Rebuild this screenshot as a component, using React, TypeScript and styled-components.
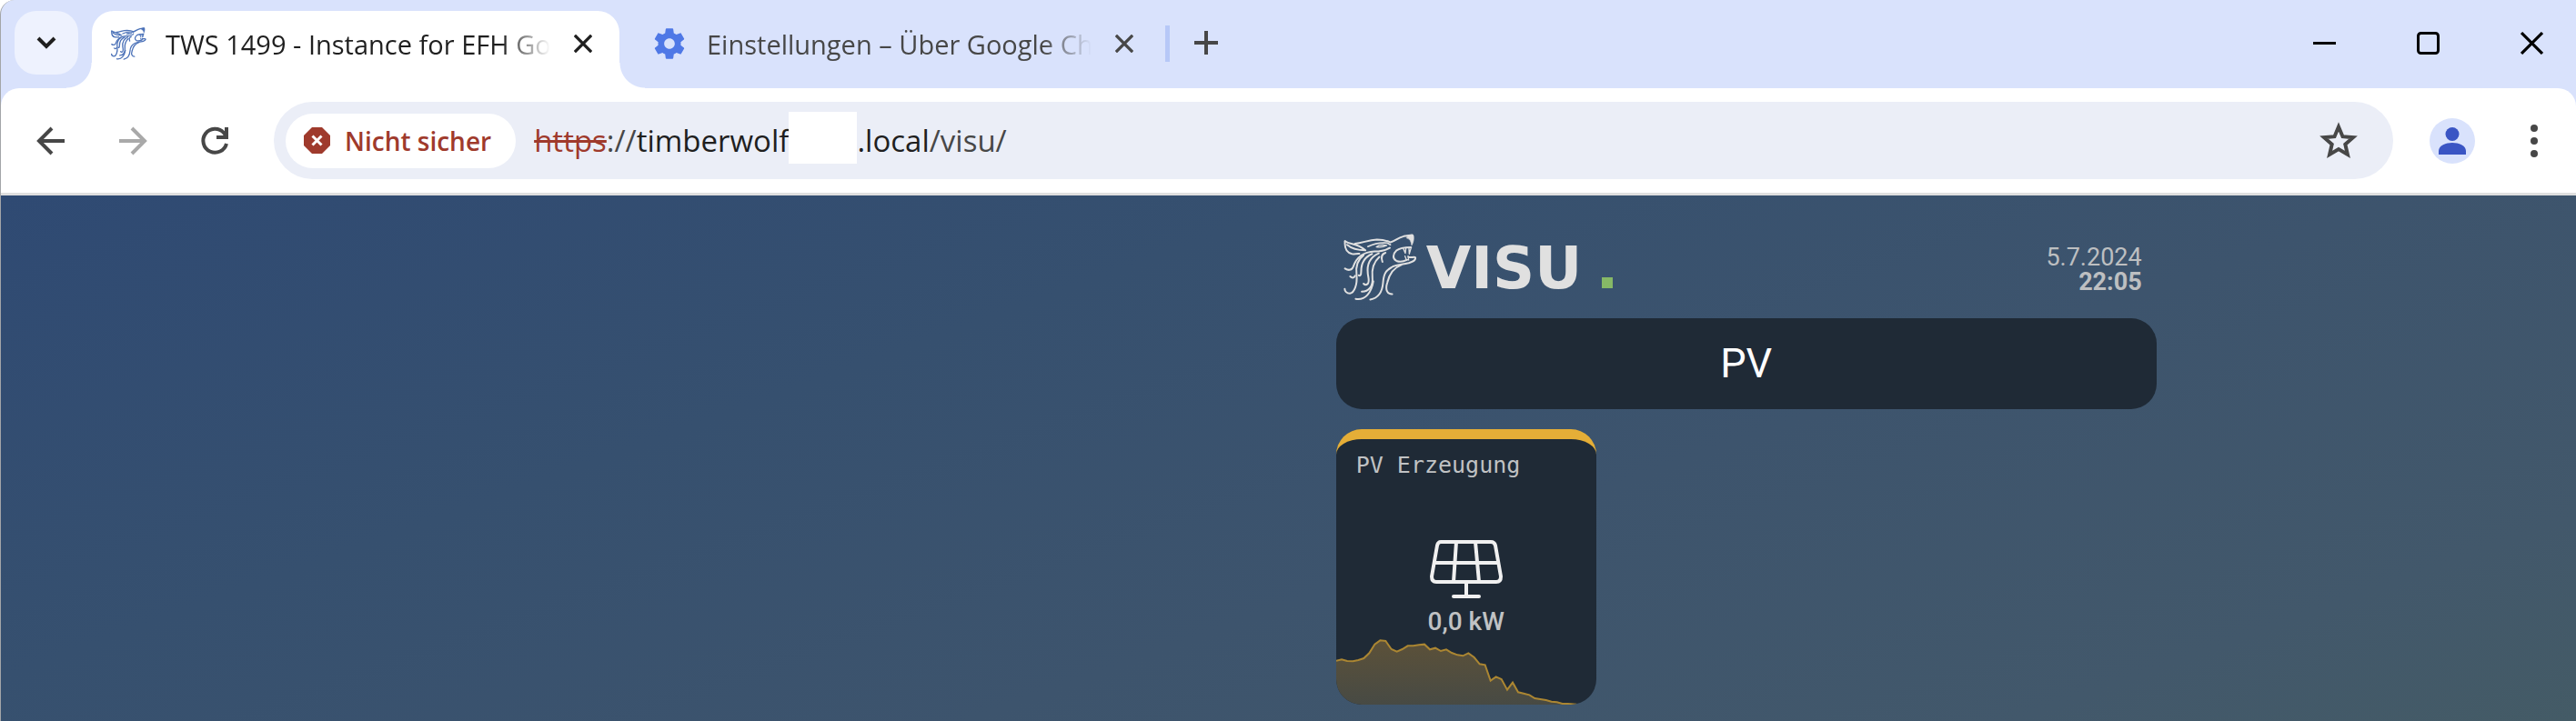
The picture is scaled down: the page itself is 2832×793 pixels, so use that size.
import React from "react";
import styled, { createGlobalStyle, css } from "styled-components";

const uiFont = `"Segoe UI", "Open Sans", "Noto Sans", sans-serif`;

const GlobalStyle = createGlobalStyle`
  *, *::before, *::after { box-sizing: border-box; }
  body { margin: 0; font-family: ${uiFont}; }
  button { border: 0; padding: 0; background: none; color: inherit; font: inherit; cursor: pointer; }
`;

const Window = styled.div`
  display: flex;
  flex-direction: column;
  min-height: 100vh;
  border-left: 1px solid #a3a5a8;
  border-top-left-radius: 16px;
  background: #d9e2fc;
`;

const TabStrip = styled.header`
  display: flex;
  align-items: flex-start;
  height: 97px;
  padding: 12px 0 0 15px;
`;

const SearchTabs = styled.button`
  display: flex;
  align-items: center;
  justify-content: center;
  width: 70px;
  height: 70px;
  margin-right: 15px;
  border-radius: 24px;
  background: #eef2fe;
  color: #1f1f1f;
`;

const Tab = styled.div<{ $active?: boolean }>`
  position: relative;
  display: flex;
  align-items: center;
  width: 580px;
  height: 85px;
  padding: 0 13px 14px 35px;
  color: #474747;
  ${(p) =>
    p.$active &&
    css`
      padding: 0 28px 14px 20px;
      color: #1f1f1f;
      background: #fff;
      border-radius: 24px 24px 0 0;
      &::before,
      &::after {
        content: "";
        position: absolute;
        bottom: 0;
        width: 28px;
        height: 28px;
      }
      &::before {
        right: 100%;
        background: radial-gradient(circle at 0 0, transparent 27px, #fff 28px);
      }
      &::after {
        left: 100%;
        background: radial-gradient(circle at 100% 0, transparent 27px, #fff 28px);
      }
    `}
`;

const TabIcon = styled.span`
  display: flex;
  justify-content: center;
  flex: none;
  width: 40px;
`;

const TabTitle = styled.button`
  flex: 1;
  margin: 0 12px 0 21px;
  padding-top: 2px;
  overflow: hidden;
  white-space: nowrap;
  text-align: left;
  font-size: 29px;
  line-height: 40px;
  mask-image: linear-gradient(to right, #000 calc(100% - 66px), transparent calc(100% - 12px));
`;

const TabClose = styled.button`
  display: flex;
  flex: none;
  padding: 2px;
`;

const NewTab = styled.button`
  display: flex;
  align-items: center;
  height: 70px;
  margin-left: 20px;
  padding-left: 24px;
  color: #474747;
  background: linear-gradient(#b7c8f7, #b7c8f7) 0 16px / 5px 40px no-repeat;
`;

const WindowControls = styled.div`
  display: flex;
  gap: 88px;
  margin-left: auto;
  padding: 23px 36px 0 0;
  color: #000;
`;

const ControlButton = styled.button`
  display: flex;
`;

const Toolbar = styled.nav`
  display: flex;
  align-items: center;
  height: 118px;
  padding: 0 42px 0 38px;
  border-bottom: 3px solid #dfdfdf;
  border-radius: 20px 20px 0 0;
  background: #fff;
`;

const NavButtons = styled.div`
  display: flex;
  gap: 56px;
  margin-right: 48px;
`;

const NavButton = styled.button<{ $muted?: boolean }>`
  display: flex;
  color: ${(p) => (p.$muted ? "#a9a9a9" : "#474747")};
`;

const Omnibox = styled.div`
  display: flex;
  flex: 1;
  align-items: center;
  height: 85px;
  padding: 0 38px 0 13px;
  border-radius: 43px;
  background: #ebeef7;
`;

const SecurityChip = styled.button`
  display: flex;
  align-items: center;
  gap: 16px;
  height: 60px;
  padding: 0 27px 0 20px;
  border-radius: 30px;
  background: #fff;
  color: #9f3a2c;
  font-size: 28px;
  font-weight: 600;
  white-space: nowrap;
`;

const Address = styled.div`
  display: flex;
  flex: 1;
  align-items: center;
  padding-left: 20px;
  color: #474747;
  font-size: 33px;
  line-height: 56px;
  white-space: nowrap;
`;

const Scheme = styled.s`
  color: #9f3a2c;
`;

const Host = styled.span`
  color: #1f1f1f;
`;

const Redacted = styled.span`
  width: 75px;
  height: 57px;
  margin-bottom: 6px;
  background: #fff;
`;

const Avatar = styled.button`
  display: flex;
  align-items: center;
  justify-content: center;
  width: 50px;
  height: 50px;
  margin: 0 61px 0 40px;
  border-radius: 50%;
  background: #d9e2fc;
  color: #3a55c4;
`;

const Page = styled.main`
  display: grid;
  grid-template-columns: 35fr 902px 11fr;
  flex: 1;
  align-content: start;
  padding: 38px 0 18px;
  background: linear-gradient(160deg, #2f4a73, #36506f 33%, #3d546d 60%, #42586b 86%, #445b66);
`;

const Content = styled.div`
  grid-column: 2;
  display: flex;
  flex-direction: column;
  font-family: Roboto, sans-serif;
`;

const VisuHeader = styled.header`
  display: flex;
  align-items: flex-start;
  justify-content: space-between;
  height: 97px;
  padding: 0 16px 0 8px;
`;

const Logo = styled.a`
  display: flex;
  align-items: flex-start;
  color: #e0e0e0;
  text-decoration: none;
`;

const Wordmark = styled.span`
  width: 193px;
  margin: 10px 0 0 10px;
  font-family: "DejaVu Sans", sans-serif;
  font-size: 64px;
  font-weight: 700;
  line-height: 64px;
`;

const LogoDot = styled.span`
  width: 12px;
  height: 12px;
  margin-top: 52px;
  background: #86b866;
`;

const Clock = styled.div`
  padding-top: 17px;
  color: #bdbfc1;
  font-size: 27px;
  line-height: 27px;
  text-align: right;
`;

const Time = styled.div`
  font-weight: 700;
`;

const PageTitle = styled.h1`
  margin: 0 0 22px;
  border-radius: 28px;
  background: #1f2a36;
  color: #fff;
  font-size: 45px;
  font-weight: 400;
  line-height: 100px;
  text-align: center;
`;

const Tile = styled.section`
  display: flex;
  flex-direction: column;
  width: 286px;
  height: 303px;
  overflow: hidden;
  border-top: 11px solid #e5ae37;
  border-radius: 28px;
  background: #1f2a36;
  color: #c0c2c4;
`;

const TileTitle = styled.h2`
  margin: 0;
  padding: 13px 22px 0;
  font-family: "DejaVu Sans Mono", monospace;
  font-size: 25px;
  font-weight: 400;
  line-height: 32px;
`;

const TileBody = styled.div`
  display: flex;
  flex: 1;
  flex-direction: column;
  align-items: center;
  justify-content: flex-end;
  gap: 8px;
  padding-bottom: 2px;
  font-size: 28px;
  font-weight: 500;
  line-height: 32px;
`;

const Chart = styled.svg`
  display: block;
  width: 100%;
  height: 73px;
`;

const Wolf = ({ width, height, stroke = 5 }: { width: number; height: number; stroke?: number }) => (
  <svg width={width} height={height} viewBox="24 21 242 222" fill="none" stroke="currentColor" strokeWidth={stroke} strokeLinecap="round" strokeLinejoin="round" aria-hidden="true">
    <path d="M29 46C27 68 34 84 52 88C58 89 66 88 76 87" />
    <path d="M29 46C46 58 70 52 96 76C72 76 50 70 36 58" />
    <path d="M62 54C88 52 104 42 134 41C152 41 166 44 178 50C196 44 200 36 222 30L250 26" />
    <path d="M236 27C244 25 252 25 254 27C256 40 254 50 248 60C247 48 242 38 232 36Z" fill="currentColor" strokeWidth="2" />
    <path d="M104 64C120 56 140 50 168 52L178 58" strokeWidth={stroke - 1} />
    <path d="M132 65C142 57 156 58 166 60C156 65 146 67 132 65Z" strokeWidth={stroke - 2} />
    <path d="M246 66C226 66 208 68 198 77C186 88 184 104 198 111C208 115 222 113 232 108" />
    <path d="M220 69L227 86L229 69M239 67L240 88L246 68M226 95L230 106L238 108L236 95" strokeWidth={stroke - 2} />
    <path d="M238 98C246 102 256 96 260 100C262 111 250 114 238 118C216 124 198 122 182 132C160 144 156 158 154 182C152 208 144 232 112 238" />
    <path d="M214 124C192 132 176 148 168 182C160 206 168 220 184 220" />
    <path d="M176 68C162 76 142 80 126 80C90 82 68 96 56 130C50 144 38 142 29 136" />
    <path d="M162 84C150 88 146 96 152 114" />
    <path d="M90 92C66 110 64 132 67 156C70 188 60 216 45 218C34 218 28 210 28 203" />
    <path d="M62 160C58 168 52 168 46 162" />
    <path d="M118 88C94 98 82 120 82 146C82 158 78 162 74 158" />
    <path d="M140 86C112 98 100 122 104 154C106 168 110 178 104 186C100 190 94 190 90 186" />
    <path d="M142 98C122 116 116 138 119 166C122 192 108 212 84 212" />
    <path d="M122 178C116 214 96 242 64 236" />
  </svg>
);

const Cross = ({ size, stroke }: { size: number; stroke: number }) => (
  <svg width={size} height={size} viewBox="0 0 24 24" fill="none" stroke="currentColor" strokeWidth={stroke} aria-hidden="true">
    <path d="M1 1L23 23M23 1L1 23" />
  </svg>
);

const production =
  "M57 832L75 828L93 833L112 834L130 830L148 824L166 807L184 778L202 765L220 767L239 794L257 802L275 794L293 783L311 783L330 780L348 778L366 795L384 790L402 800L420 795L438 806L457 813L475 816L493 807L512 821L530 843L548 846L566 898L584 885L602 893L621 928L639 904L657 936L675 940L694 945L712 956L730 959L749 962L767 967L785 969L803 974L821 974L850 976";

export default function App() {
  return (
    <>
      <GlobalStyle />
      <Window>
        <TabStrip>
          <SearchTabs aria-label="Tabs durchsuchen">
            <svg width="22" height="14" viewBox="0 0 22 14" fill="none" stroke="currentColor" strokeWidth="4" aria-hidden="true">
              <path d="M2 2L11 11L20 2" />
            </svg>
          </SearchTabs>
          <Tab $active>
            <TabIcon style={{ color: "#4c72b8" }}>
              <Wolf width={39} height={36} stroke={8} />
            </TabIcon>
            <TabTitle>TWS 1499 - Instance for EFH Go</TabTitle>
            <TabClose aria-label="Tab schließen">
              <Cross size={20} stroke={4} />
            </TabClose>
          </Tab>
          <Tab>
            <TabIcon>
              <svg width="40" height="40" viewBox="0 0 24 24" fill="#4f78e6" aria-hidden="true">
                <path d="M19.43 12.98c.04-.32.07-.64.07-.98s-.03-.66-.07-.98l2.11-1.65c.19-.15.24-.42.12-.64l-2-3.46c-.12-.22-.39-.3-.61-.22l-2.49 1c-.52-.4-1.08-.73-1.69-.98l-.38-2.65C14.46 2.18 14.25 2 14 2h-4c-.25 0-.46.18-.49.42l-.38 2.65c-.61.25-1.17.59-1.69.98l-2.49-1c-.23-.09-.49 0-.61.22l-2 3.46c-.13.22-.07.49.12.64l2.11 1.65c-.04.32-.07.65-.07.98s.03.66.07.98l-2.11 1.65c-.19.15-.24.42-.12.64l2 3.46c.12.22.39.3.61.22l2.49-1c.52.4 1.08.73 1.69.98l.38 2.65c.03.24.24.42.49.42h4c.25 0 .46-.18.49-.42l.38-2.65c.61-.25 1.17-.59 1.69-.98l2.49 1c.23.09.49 0 .61-.22l2-3.46c.12-.22.07-.49-.12-.64l-2.11-1.65zM12 15.5c-1.93 0-3.5-1.57-3.5-3.5s1.57-3.5 3.5-3.5 3.5 1.57 3.5 3.5-1.57 3.5-3.5 3.5z" />
              </svg>
            </TabIcon>
            <TabTitle>Einstellungen – Über Google Ch</TabTitle>
            <TabClose aria-label="Tab schließen">
              <Cross size={20} stroke={4} />
            </TabClose>
          </Tab>
          <NewTab aria-label="Neuer Tab">
            <svg width="40" height="26" viewBox="0 0 40 26" fill="none" stroke="currentColor" strokeWidth="4" aria-hidden="true">
              <path d="M8 13H34M21 0V26" />
            </svg>
          </NewTab>
          <WindowControls>
            <ControlButton aria-label="Minimieren">
              <svg width="26" height="25" viewBox="0 0 26 25" aria-hidden="true">
                <path d="M0 12.5H25" stroke="currentColor" strokeWidth="3" />
              </svg>
            </ControlButton>
            <ControlButton aria-label="Maximieren">
              <svg width="26" height="25" viewBox="0 0 26 25" aria-hidden="true">
                <rect x="1.5" y="1.5" width="22" height="22" rx="3" fill="none" stroke="currentColor" strokeWidth="3" />
              </svg>
            </ControlButton>
            <ControlButton aria-label="Schließen">
              <Cross size={25} stroke={3} />
            </ControlButton>
          </WindowControls>
        </TabStrip>

        <Toolbar>
          <NavButtons>
            <NavButton aria-label="Zurück">
              <svg width="34" height="34" viewBox="0 0 34 34" fill="none" stroke="currentColor" strokeWidth="4" aria-hidden="true">
                <path d="M32 17H4M18 3L4 17L18 31" />
              </svg>
            </NavButton>
            <NavButton $muted aria-label="Vorwärts">
              <svg width="34" height="34" viewBox="0 0 34 34" fill="none" stroke="currentColor" strokeWidth="4" aria-hidden="true">
                <path d="M2 17H30M16 3L30 17L16 31" />
              </svg>
            </NavButton>
            <NavButton aria-label="Neu laden">
              <svg width="34" height="34" viewBox="0 0 34 34" fill="none" stroke="currentColor" strokeWidth="4" aria-hidden="true">
                <path d="M30 20A13 13 0 1 1 27 8L30 12M30 2V13H19" />
              </svg>
            </NavButton>
          </NavButtons>
          <Omnibox>
            <SecurityChip>
              <svg width="29" height="29" viewBox="0 0 29 29" aria-hidden="true">
                <path d="M9 0H20L29 9V20L20 29H9L0 20V9Z" fill="currentColor" />
                <path d="M9.500 9.500L19.500 19.500M19.500 9.500L9.500 19.500" stroke="#fff" strokeWidth="3" />
              </svg>
              Nicht sicher
            </SecurityChip>
            <Address role="textbox" aria-label="Adresse" tabIndex={0}>
              <Scheme>https</Scheme>
              <span>://</span>
              <Host>timberwolf</Host>
              <Redacted />
              <Host>.local</Host>
              <span>/visu/</span>
            </Address>
            <NavButton aria-label="Lesezeichen hinzufügen">
              <svg width="44" height="44" viewBox="0 0 44 44" fill="none" stroke="currentColor" strokeWidth="4" aria-hidden="true">
                <path d="M22 6.500L26.500 17.200L38 18.200L29.300 25.800L31.900 37L22 31.100L12.100 37L14.700 25.800L6 18.200L17.500 17.200Z" />
              </svg>
            </NavButton>
          </Omnibox>
          <Avatar aria-label="Profil">
            <svg width="30" height="30" viewBox="0 0 30 30" fill="currentColor" aria-hidden="true">
              <circle cx="15" cy="7.500" r="7.500" />
              <path d="M0 30V26C0 20 8 17 15 17S30 20 30 26V30Z" />
            </svg>
          </Avatar>
          <NavButton aria-label="Menü">
            <svg width="8" height="36" viewBox="0 0 8 36" fill="currentColor" aria-hidden="true">
              <circle cx="4" cy="4" r="4" />
              <circle cx="4" cy="18" r="4" />
              <circle cx="4" cy="32" r="4" />
            </svg>
          </NavButton>
        </Toolbar>

        <Page>
          <Content>
            <VisuHeader>
              <Logo href="#">
                <Wolf width={81} height={82} stroke={6} />
                <Wordmark>VISU</Wordmark>
                <LogoDot />
              </Logo>
              <Clock>
                <div>5.7.2024</div>
                <Time>22:05</Time>
              </Clock>
            </VisuHeader>
            <PageTitle>PV</PageTitle>
            <Tile>
              <TileTitle>PV Erzeugung</TileTitle>
              <TileBody>
                <svg width="80" height="66" viewBox="0 0 80 66" fill="none" stroke="#f0f0f0" strokeWidth="4" strokeLinecap="round" strokeLinejoin="round" aria-hidden="true">
                  <path d="M12 2H67Q71 2 72 6L78 40Q78 46 73 46H7Q2 46 2 40L8 6Q9 2 12 2Z" />
                  <path d="M5 25H75M29 2L26 46M50 2L54 46M40 46V62M26 62H54" />
                </svg>
                <span>0,0 kW</span>
              </TileBody>
              <Chart viewBox="57 758 858 219" preserveAspectRatio="none" aria-hidden="true">
                <defs>
                  <linearGradient id="area" x1="0" y1="0" x2="0" y2="1">
                    <stop offset="0" stopColor="#5c5139" />
                    <stop offset="1" stopColor="#474a44" />
                  </linearGradient>
                </defs>
                <path d={`${production}V980H57Z`} fill="url(#area)" />
                <path d={production} fill="none" stroke="#ab8632" strokeWidth="6" />
              </Chart>
            </Tile>
          </Content>
        </Page>
      </Window>
    </>
  );
}
